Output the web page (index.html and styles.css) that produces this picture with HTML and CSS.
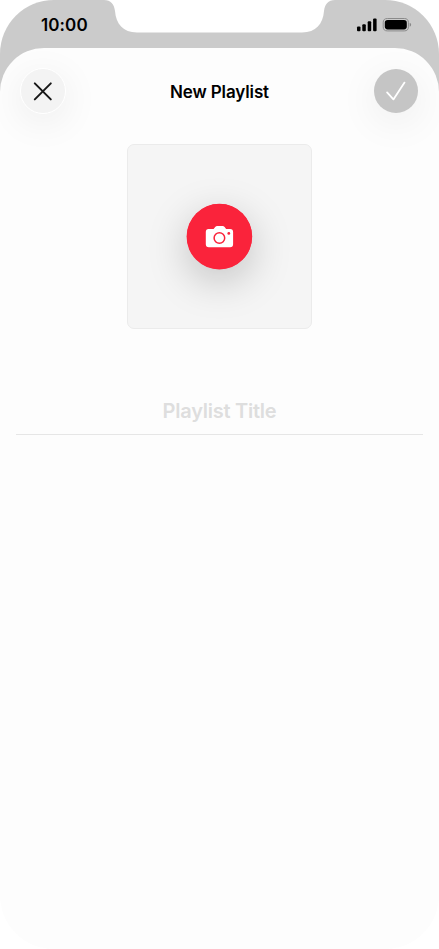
FILE: index.html
```html
<!DOCTYPE html>
<html lang="en">
<head>
<meta charset="utf-8">
<title>New Playlist</title>
<link rel="stylesheet" href="styles.css">
</head>
<body>
<main class="phone">
  <svg class="notch" width="231" height="33" viewBox="0 0 231 33" aria-hidden="true"><path fill="#fff" d="M0 0C7 0 10 4 11 11C12 24 19 32.4 33 32.4H198C212 32.4 219 24 220 11C221 4 224 0 231 0Z"/></svg>
  <div class="status">
    <span class="time">10:00</span>
    <svg width="56" height="16" viewBox="0 0 56 16" aria-hidden="true">
      <rect x="1" y="9.5" width="3.5" height="4.7" rx="1"/>
      <rect x="6.3" y="7.3" width="3.5" height="6.9" rx="1"/>
      <rect x="11.7" y="4.3" width="3.5" height="9.9" rx="1"/>
      <rect x="17.1" y="1.4" width="3.5" height="12.8" rx="1"/>
      <rect x="27.2" y="1.5" width="25.2" height="12.4" rx="4.1" fill="none" stroke="#8a8a8a"/>
      <path d="M53.7 5.7v4q1.4-.6 1.4-2t-1.4-2Z" fill="#858585"/>
      <rect x="28.8" y="3" width="22" height="9.4" rx="2.8"/>
    </svg>
  </div>
  <section class="sheet">
    <header class="bar">
      <button class="round close" aria-label="Close"><svg width="20" height="20" viewBox="0 0 20 20"><path d="M1.8 2.4l16 16M17.8 2.4L1.8 18.4"/></svg></button>
      <h1>New Playlist</h1>
      <button class="round done" aria-label="Done"><svg width="22" height="22" viewBox="0 0 22 22"><path d="M2.1 12.4l6.3 7L19.5 2.6"/></svg></button>
    </header>
    <div class="cover">
      <button class="camera" aria-label="Add photo">
        <svg width="66" height="66" viewBox="0 0 66 66">
          <circle cx="32.4" cy="32.6" r="32.8" fill="#fa233b"/>
          <g transform="translate(18.6 21.8)">
            <path fill="#fff" d="M3 3.2H8L9.6 1.2Q10.4.3 11.6.3H17Q18.2.3 19 1.2L20.5 3.2H24.5Q27.5 3.2 27.5 6.2V18.5Q27.5 21.5 24.5 21.5H3.2Q.2 21.5.2 18.5V6.2Q.2 3.2 3 3.2Z"/>
            <circle cx="13.8" cy="12.2" r="5.3" fill="#fff" stroke="#fa233b" stroke-width="1.5"/>
            <circle cx="23.2" cy="7.6" r="1.4" fill="#fa233b"/>
          </g>
        </svg>
      </button>
    </div>
    <div class="title-field">Playlist Title</div>
  </section>
</main>
</body>
</html>
```
FILE: styles.css
```css
* { box-sizing: border-box; }
body { margin: 0; background: #fff; font-family: Inter, sans-serif; color: #000; }
button { padding: 0; border: 0; display: grid; place-items: center; }
.phone {
  position: relative;
  width: 439px;
  height: 949px;
  overflow: hidden;
  border-radius: 54px;
  background: linear-gradient(#cbcbcb 120px, #fdfdfd 120px);
}
.notch { position: absolute; left: 104px; top: 0; }
.status {
  height: 48px;
  padding: 0 27px 0 41px;
  display: flex;
  justify-content: space-between;
  align-items: center;
}
.status svg { margin-top: 1px; }
.time { font-size: 17px; line-height: 20px; font-weight: 600; margin-top: 2px; letter-spacing: .1px; }
.sheet {
  height: 901px;
  border-radius: 44px 44px 54px 54px;
  background: #fdfdfd;
  overflow: hidden;
}
.bar {
  height: 96px;
  padding: 20px 20px 0;
  display: flex;
  align-items: flex-start;
  justify-content: space-between;
}
h1 { margin: 14px 1px 0 0; font-size: 17px; line-height: 20px; font-weight: 600; letter-spacing: -.12px; }
.round { width: 46px; height: 46px; border-radius: 50%; }
.round svg { fill: none; stroke-linecap: round; stroke-linejoin: round; }
.close { background: #f3f3f3; border: 1.5px solid #fff; box-shadow: 0 8px 38px rgba(0, 0, 0, .075); }
.close svg { stroke: #191919; stroke-width: 2; }
.done { width: 44px; height: 44px; margin: 1px 1px 0 0; background: #c5c5c5; box-shadow: 0 9px 40px rgba(0, 0, 0, .075); }
.done svg { stroke: #fff; stroke-width: 1.8; }
.cover {
  width: 185px;
  height: 185px;
  margin: 0 auto;
  border: 1px solid #ebebeb;
  border-radius: 7px;
  background: #f5f5f5;
  display: grid;
  place-items: center;
}
.camera { width: 65px; height: 65px; border-radius: 50%; background: #fa233b; box-shadow: 0 12px 42px rgba(0, 0, 0, .22); }
.camera svg { overflow: visible; }
.title-field {
  height: 42px;
  margin: 64px 16px 0;
  padding-top: 6px;
  border-bottom: 1px solid #e6e6e6;
  color: #dedede;
  font-size: 20px;
  line-height: 24px;
  font-weight: 600;
  letter-spacing: -.25px;
  text-align: center;
}
```
